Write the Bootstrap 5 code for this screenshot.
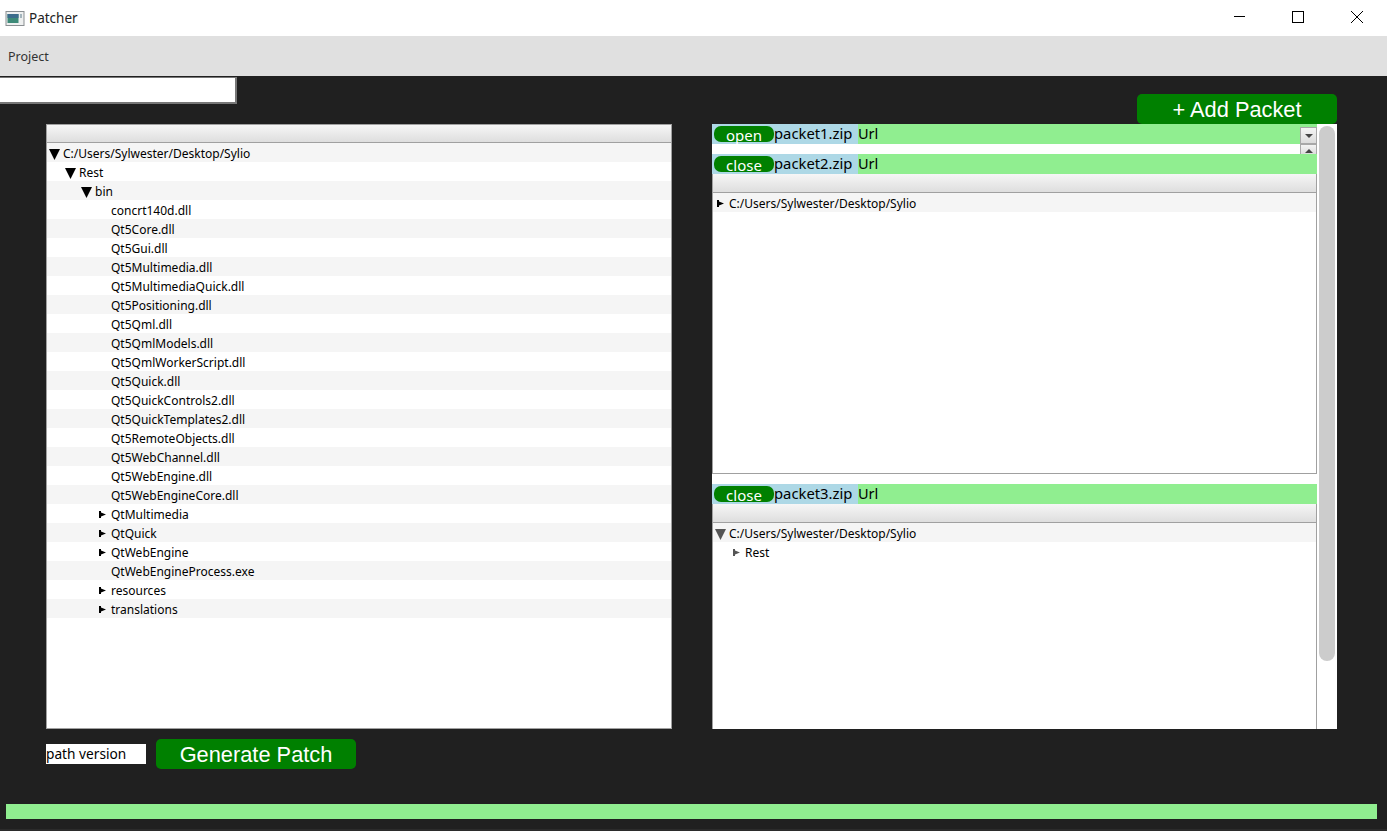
<!DOCTYPE html>
<html lang="en">
<head>
    <meta charset="UTF-8">
    <meta name="viewport" content="width=device-width, initial-scale=1.0">
    <title>Patcher</title>
    <link href="https://cdn.jsdelivr.net/npm/bootstrap@5.3.0/dist/css/bootstrap.min.css" rel="stylesheet">
    <script src="https://cdn.jsdelivr.net/npm/bootstrap@5.3.0/dist/js/bootstrap.bundle.min.js"></script>
    <style>
        html, body { height: 831px; overflow: hidden; }
        body { background: #202020; font-family: "Noto Sans", "Liberation Sans", sans-serif; font-size: 12px; color: #000; }
        .win-title { height: 36px; background: #fff; font-size: 13.5px; color: #222; padding-left: 5px; }
        .win-title svg { display: block; }
        .win-btns { gap: 47px; padding-right: 24px; padding-bottom: 2px; }
        .menu-strip { height: 40px; background: #e0e0e0; padding: 2px 0 0 8px; font-size: 12.5px; color: #333; }
        .top-strip { height: 48px; padding-right: 50px; }
        .filter-box { width: 237px; height: 27px; margin-top: 1px; background: #fff; border: 2px solid #777; border-left: 0; border-top-width: 1px; }
        .green-btn { width: 200px; height: 30px; padding: 1px 0 0; background: #008000; color: #fff; border: 0; border-radius: 5px; font-family: "Liberation Sans", sans-serif; font-size: 21.8px; line-height: 29px; }
        .green-btn:hover { background: #008000; color: #fff; }
        .panes { padding: 0 50px 0 46px; gap: 40px; height: 605px; }
        .pane-left { width: 626px; background: #fff; border: 1px solid #a0a0a0; }
        .pane-left .head-bar { height: 17px; }
        .pane-right { width: 625px; background: #fff; }
        .head-bar { height: 18px; background: linear-gradient(#f6f6f6, #dedede); border-bottom: 1px solid #a0a0a0; box-sizing: content-box; }
        .tree-row { height: 19px; line-height: 21px; white-space: nowrap; }
        .tree-row:nth-child(odd) { background: #f5f5f5; }
        .tree-arrow { width: 16px; height: 19px; flex: none; }
        .depth-1 { padding-left: 16px; }
        .depth-2 { padding-left: 32px; }
        .depth-3 { padding-left: 48px; }
        .packet-col { width: 605px; }
        .packet-row { height: 20px; background: #90ee90; }
        .packet-btn { width: 60px; height: 16px; margin-left: 2px; margin-top: 2px; padding: 0; background: #008000; color: #fff; border: 0; border-radius: 7px; font-size: 15px; line-height: 18px; font-family: "Noto Sans", sans-serif; }
        .packet-btn:hover { background: #008000; color: #fff; }
        .packet-head { width: 146px; background: #add8e6; display: flex; }
        .packet-head span { font-size: 14.8px; line-height: 19px; }
        .packet-url { font-size: 14.5px; line-height: 19px; }
        .combo-down { width: 17px; height: 17px; margin-top: 3px; background: linear-gradient(#f4f4f4, #dcdcdc); border: 1px solid #a8a8a8; }
        .gap-strip { height: 10px; background: #fff; }
        .combo-up { width: 17px; height: 10px; padding-bottom: 1px; background: linear-gradient(#f4f4f4, #dcdcdc); border: 1px solid #a8a8a8; border-bottom: 0; }
        .sub-tree { border: 1px solid #a0a0a0; border-top: 0; }
        .sub-tree.open-one { height: 300px; }
        .sub-tree.open-two { height: 225px; border-bottom: 0; }
        .scroll-side { width: 20px; padding-left: 2px; padding-top: 2px; }
        .scroll-thumb { width: 16px; height: 535px; background: #ccc; border-radius: 8px; }
        .bottom-strip { padding: 10px 0 0 46px; gap: 10px; height: 75px; }
        .version-box { width: 100px; height: 20px; margin-top: 5px; background: #fff; font-size: 13.7px; line-height: 20px; }
        .progress-line { height: 15px; margin: 0 10px 0 6px; background: #90ee90; }
        .foot-edge { height: 2px; margin-top: 10px; background: #2b2b2b; }
    </style>
</head>
<body>
    <div class="win-title d-flex align-items-center justify-content-between">
        <div class="d-flex align-items-center gap-1">
            <svg width="20" height="15" viewBox="0 0 19 15"><rect x="0.5" y="0.5" width="18" height="14" fill="#eef0f0" stroke="#8a8f92"/><rect x="2" y="3" width="11" height="9" fill="#3d8a78"/><rect x="2" y="3" width="11" height="4" fill="#3c6c8c"/><rect x="15" y="3" width="1" height="4" fill="#5a7a8a"/></svg>
            <span>Patcher</span>
        </div>
        <div class="win-btns d-flex align-items-center">
            <svg width="12" height="12" viewBox="0 0 12 12"><path d="M1 5.500H12" stroke="#000"/></svg>
            <svg width="12" height="12" viewBox="0 0 12 12"><rect x="0.5" y="0.5" width="11" height="11" fill="none" stroke="#000"/></svg>
            <svg width="12" height="12" viewBox="0 0 12 12"><path d="M0 0L12 12M12 0L0 12" stroke="#000"/></svg>
        </div>
    </div>
    <div class="menu-strip d-flex align-items-center">Project</div>

    <div class="top-strip d-flex justify-content-between align-items-end">
        <div class="filter-box align-self-start"></div>
        <button class="btn green-btn" type="button">+ Add Packet</button>
    </div>

    <div class="panes d-flex">
        <div class="pane-left" id="main-tree">
            <div class="head-bar"></div>
            <div id="main-rows"></div>
        </div>
        <div class="pane-right d-flex">
            <div class="packet-col">
                <div class="packet-row d-flex">
                    <div class="packet-head"><button class="btn packet-btn" type="button">open</button><span>packet1.zip</span></div>
                    <div class="packet-url flex-grow-1">Url</div>
                    <div class="combo-down d-flex align-items-center justify-content-center"><svg width="8" height="4" viewBox="0 0 8 4"><path d="M0 0H8L4 4Z" fill="#444"/></svg></div>
                </div>
                <div class="gap-strip d-flex justify-content-end">
                    <div class="combo-up d-flex align-items-end justify-content-center"><svg width="8" height="4" viewBox="0 0 8 4"><path d="M0 4H8L4 0Z" fill="#444"/></svg></div>
                </div>
                <div class="packet-row d-flex">
                    <div class="packet-head"><button class="btn packet-btn" type="button">close</button><span>packet2.zip</span></div>
                    <div class="packet-url flex-grow-1">Url</div>
                </div>
                <div class="sub-tree open-one">
                    <div class="head-bar"></div>
                    <div>
                        <div class="tree-row d-flex">
                            <svg class="tree-arrow" viewBox="0 0 16 19"><path d="M4 7H6V8.500L11 10.500L6 12.500V14H4Z" fill="#000"/></svg>
                            <span>C:/Users/Sylwester/Desktop/Sylio</span>
                        </div>
                    </div>
                </div>
                <div class="gap-strip"></div>
                <div class="packet-row d-flex">
                    <div class="packet-head"><button class="btn packet-btn" type="button">close</button><span>packet3.zip</span></div>
                    <div class="packet-url flex-grow-1">Url</div>
                </div>
                <div class="sub-tree open-two">
                    <div class="head-bar"></div>
                    <div>
                        <div class="tree-row d-flex">
                            <svg class="tree-arrow" viewBox="0 0 16 19"><path d="M2 6H13L7.500 17Z" fill="#555"/></svg>
                            <span>C:/Users/Sylwester/Desktop/Sylio</span>
                        </div>
                        <div class="tree-row d-flex depth-1">
                            <svg class="tree-arrow" viewBox="0 0 16 19"><path d="M4 7H6V8.500L11 10.500L6 12.500V14H4Z" fill="#555"/></svg>
                            <span>Rest</span>
                        </div>
                    </div>
                </div>
            </div>
            <div class="scroll-side"><div class="scroll-thumb"></div></div>
        </div>
    </div>

    <div class="bottom-strip d-flex align-items-start">
        <div class="version-box">path version</div>
        <button class="btn green-btn" type="button">Generate Patch</button>
    </div>
    <div class="progress-line"></div>
    <div class="foot-edge"></div>

    <script>
        // depth, arrow (d = down, r = right, empty = leaf), name
        const rows = [
            [0, 'd', 'C:/Users/Sylwester/Desktop/Sylio'], [1, 'd', 'Rest'], [2, 'd', 'bin'],
            [3, '', 'concrt140d.dll'], [3, '', 'Qt5Core.dll'], [3, '', 'Qt5Gui.dll'],
            [3, '', 'Qt5Multimedia.dll'], [3, '', 'Qt5MultimediaQuick.dll'], [3, '', 'Qt5Positioning.dll'],
            [3, '', 'Qt5Qml.dll'], [3, '', 'Qt5QmlModels.dll'], [3, '', 'Qt5QmlWorkerScript.dll'],
            [3, '', 'Qt5Quick.dll'], [3, '', 'Qt5QuickControls2.dll'], [3, '', 'Qt5QuickTemplates2.dll'],
            [3, '', 'Qt5RemoteObjects.dll'], [3, '', 'Qt5WebChannel.dll'], [3, '', 'Qt5WebEngine.dll'],
            [3, '', 'Qt5WebEngineCore.dll'], [3, 'r', 'QtMultimedia'], [3, 'r', 'QtQuick'],
            [3, 'r', 'QtWebEngine'], [3, '', 'QtWebEngineProcess.exe'], [3, 'r', 'resources'], [3, 'r', 'translations']
        ];
        const arrows = {
            d: '<path d="M2 6H13L7.500 17Z" fill="#000"/>',
            r: '<path d="M4 7H6V8.500L11 10.500L6 12.500V14H4Z" fill="#000"/>',
            '': ''
        };
        document.getElementById('main-rows').innerHTML = rows.map(r => `
            <div class="tree-row d-flex depth-${r[0]}">
                <svg class="tree-arrow" viewBox="0 0 16 19">${arrows[r[1]]}</svg>
                <span>${r[2]}</span>
            </div>`).join('');
    </script>
</body>
</html>
